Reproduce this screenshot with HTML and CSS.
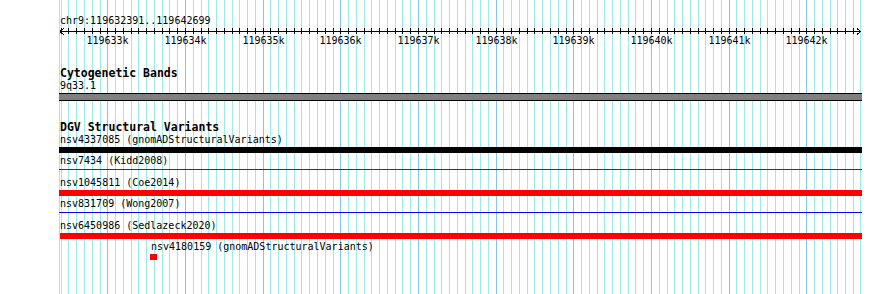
FILE: index.html
```html
<!DOCTYPE html>
<html lang="en">

<head>
    <meta charset="UTF-8">
    <title>chr9:119632391..119642699</title>
    <link rel="stylesheet" href="styles.css">
</head>

<body>
    <div class="browser">
        <div id="grid" class="grid"></div>

        <div class="view">
            <div class="ruler">
                <div class="locus">chr9:119632391..119642699</div>
                <svg id="scale" class="scale" width="803" height="8"></svg>
                <div id="scaleLabels" class="scale-labels"></div>
            </div>

            <section class="track">
                <h2>Cytogenetic Bands</h2>
                <div class="feature-label">9q33.1</div>
                <div class="band"></div>
            </section>

            <section class="track">
                <h2>DGV Structural Variants</h2>

                <div class="row">
                    <div class="feature-label">nsv4337085 (gnomADStructuralVariants)</div>
                    <div class="bar bar-black"></div>
                </div>
                <div class="row">
                    <div class="feature-label">nsv7434 (Kidd2008)</div>
                    <div class="bar"><div class="line line-purple"></div></div>
                </div>
                <div class="row">
                    <div class="feature-label">nsv1045811 (Coe2014)</div>
                    <div class="bar bar-red"></div>
                </div>
                <div class="row">
                    <div class="feature-label">nsv831709 (Wong2007)</div>
                    <div class="bar"><div class="line line-blue"></div></div>
                </div>
                <div class="row">
                    <div class="feature-label">nsv6450986 (Sedlazeck2020)</div>
                    <div class="bar bar-red bar-inset"></div>
                </div>
                <div class="row row-short">
                    <div class="feature-label">nsv4180159 (gnomADStructuralVariants)</div>
                    <div class="bar bar-red bar-small"></div>
                </div>
            </section>
        </div>
    </div>

    <script>
        const start = 119632391;
        const end = 119642699;
        const pxPerBp = 0.07767;
        const grid = document.getElementById('grid');
        const scale = document.getElementById('scale');
        const scaleLabels = document.getElementById('scaleLabels');
        const svgNS = 'http://www.w3.org/2000/svg';

        // page x of a base position
        function toX(bp) {
            return Math.round(60 + (bp - start) * pxPerBp);
        }

        function addGridline(x, major) {
            const line = document.createElement('div');
            line.className = major ? 'gridline gridline-major' : 'gridline';
            line.style.left = x + 'px';
            grid.appendChild(line);
        }

        function addSvgLine(x1, y1, x2, y2) {
            const line = document.createElementNS(svgNS, 'line');
            line.setAttribute('x1', x1);
            line.setAttribute('y1', y1);
            line.setAttribute('x2', x2);
            line.setAttribute('y2', y2);
            scale.appendChild(line);
        }

        addGridline(59, false);
        addGridline(toX(end) - 1, false);

        // svg coords start at page x 59
        addSvgLine(1, 4.5, 802, 4.5);
        addSvgLine(1, 4.5, 5, 1.5);
        addSvgLine(1, 4.5, 5, 7.5);
        addSvgLine(802, 4.5, 798, 1.5);
        addSvgLine(802, 4.5, 798, 7.5);

        for (let bp = Math.ceil(start / 100) * 100; bp < end; bp += 100) {
            const x = toX(bp);
            const major = bp % 1000 === 0;
            addGridline(x, major);
            addSvgLine(x - 59 + 0.5, 1, x - 59 + 0.5, 7);

            if (major) {
                const label = document.createElement('span');
                label.className = 'scale-label';
                label.textContent = (bp / 1000) + 'k';
                label.style.left = (x - 59 + 0.5) + 'px';
                scaleLabels.appendChild(label);
            }
        }
    </script>
</body>

</html>
```

FILE: styles.css
```css
* {
    box-sizing: border-box;
    margin: 0;
    padding: 0;
}

body {
    font-family: 'DejaVu Sans Mono', 'Liberation Mono', monospace;
    font-size: 10px;
    line-height: 12px;
    color: #000;
    background-color: #fff;
}

.browser {
    position: relative;
    height: 294px;
    overflow: hidden;
}

.grid {
    position: absolute;
    top: 0;
    left: 0;
    right: 0;
    bottom: 0;
}

.gridline {
    position: absolute;
    top: 0;
    bottom: 0;
    width: 1px;
    background-color: #9ee9e9;
}

.gridline-major {
    background-color: #84c4ee;
}

.view {
    position: relative;
    width: 803px;
    margin-left: 59px;
    padding-top: 15px;
}

.locus {
    padding-left: 1px;
}

.scale {
    display: block;
    stroke: #000;
    stroke-width: 1;
    shape-rendering: crispEdges;
}

.scale-labels {
    position: relative;
    height: 12px;
}

.scale-label {
    position: absolute;
    top: 0;
    transform: translateX(-50%);
    white-space: nowrap;
}

.track {
    margin-top: 20px;
}

h2 {
    font-size: 11.5px;
    font-weight: bold;
    line-height: 13px;
    padding-left: 1px;
}

.feature-label {
    padding-left: 1px;
    white-space: nowrap;
}

.band {
    margin-top: 1px;
    height: 8px;
    background-color: #808080;
    border-top: 1px solid #000;
    border-bottom: 1px solid #000;
}

.row {
    padding-bottom: 2px;
}

.bar {
    margin-top: 1px;
    height: 6px;
}

.bar-black {
    background-color: #000;
}

.bar-red {
    background-color: #f00;
}

.bar-inset {
    margin-left: 1px;
}

.line {
    margin-top: 2px;
    height: 1px;
}

.line-purple {
    background-color: #5a10a0;
}

.line-blue {
    background-color: #0000ff;
}

.row-short {
    padding-left: 91px;
}

.bar-small {
    width: 7px;
}
```
